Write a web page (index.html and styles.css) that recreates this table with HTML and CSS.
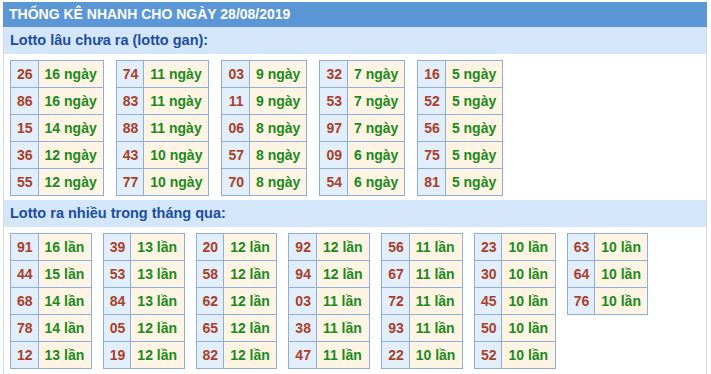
FILE: index.html
```html
<!DOCTYPE html>
<html>
<head>
<meta charset="utf-8">
<link rel="stylesheet" href="styles.css">
</head>
<body>
<div class="box">
  <div class="title">THỐNG KÊ NHANH CHO NGÀY 28/08/2019</div>
  <div class="sub">Lotto lâu chưa ra (lotto gan):</div>
  <div class="tables gan">
    <table><tr><td class="n">26</td><td class="v">16 ngày</td></tr><tr><td class="n">86</td><td class="v">16 ngày</td></tr><tr><td class="n">15</td><td class="v">14 ngày</td></tr><tr><td class="n">36</td><td class="v">12 ngày</td></tr><tr><td class="n">55</td><td class="v">12 ngày</td></tr></table>
    <table><tr><td class="n">74</td><td class="v">11 ngày</td></tr><tr><td class="n">83</td><td class="v">11 ngày</td></tr><tr><td class="n">88</td><td class="v">11 ngày</td></tr><tr><td class="n">43</td><td class="v">10 ngày</td></tr><tr><td class="n">77</td><td class="v">10 ngày</td></tr></table>
    <table><tr><td class="n">03</td><td class="v">9 ngày</td></tr><tr><td class="n">11</td><td class="v">9 ngày</td></tr><tr><td class="n">06</td><td class="v">8 ngày</td></tr><tr><td class="n">57</td><td class="v">8 ngày</td></tr><tr><td class="n">70</td><td class="v">8 ngày</td></tr></table>
    <table><tr><td class="n">32</td><td class="v">7 ngày</td></tr><tr><td class="n">53</td><td class="v">7 ngày</td></tr><tr><td class="n">97</td><td class="v">7 ngày</td></tr><tr><td class="n">09</td><td class="v">6 ngày</td></tr><tr><td class="n">54</td><td class="v">6 ngày</td></tr></table>
    <table><tr><td class="n">16</td><td class="v">5 ngày</td></tr><tr><td class="n">52</td><td class="v">5 ngày</td></tr><tr><td class="n">56</td><td class="v">5 ngày</td></tr><tr><td class="n">75</td><td class="v">5 ngày</td></tr><tr><td class="n">81</td><td class="v">5 ngày</td></tr></table>
  </div>
  <div class="sub">Lotto ra nhiều trong tháng qua:</div>
  <div class="tables nhieu">
    <table><tr><td class="n">91</td><td class="v">16 lần</td></tr><tr><td class="n">44</td><td class="v">15 lần</td></tr><tr><td class="n">68</td><td class="v">14 lần</td></tr><tr><td class="n">78</td><td class="v">14 lần</td></tr><tr><td class="n">12</td><td class="v">13 lần</td></tr></table>
    <table><tr><td class="n">39</td><td class="v">13 lần</td></tr><tr><td class="n">53</td><td class="v">13 lần</td></tr><tr><td class="n">84</td><td class="v">13 lần</td></tr><tr><td class="n">05</td><td class="v">12 lần</td></tr><tr><td class="n">19</td><td class="v">12 lần</td></tr></table>
    <table><tr><td class="n">20</td><td class="v">12 lần</td></tr><tr><td class="n">58</td><td class="v">12 lần</td></tr><tr><td class="n">62</td><td class="v">12 lần</td></tr><tr><td class="n">65</td><td class="v">12 lần</td></tr><tr><td class="n">82</td><td class="v">12 lần</td></tr></table>
    <table><tr><td class="n">92</td><td class="v">12 lần</td></tr><tr><td class="n">94</td><td class="v">12 lần</td></tr><tr><td class="n">03</td><td class="v">11 lần</td></tr><tr><td class="n">38</td><td class="v">11 lần</td></tr><tr><td class="n">47</td><td class="v">11 lần</td></tr></table>
    <table><tr><td class="n">56</td><td class="v">11 lần</td></tr><tr><td class="n">67</td><td class="v">11 lần</td></tr><tr><td class="n">72</td><td class="v">11 lần</td></tr><tr><td class="n">93</td><td class="v">11 lần</td></tr><tr><td class="n">22</td><td class="v">10 lần</td></tr></table>
    <table><tr><td class="n">23</td><td class="v">10 lần</td></tr><tr><td class="n">30</td><td class="v">10 lần</td></tr><tr><td class="n">45</td><td class="v">10 lần</td></tr><tr><td class="n">50</td><td class="v">10 lần</td></tr><tr><td class="n">52</td><td class="v">10 lần</td></tr></table>
    <table><tr><td class="n">63</td><td class="v">10 lần</td></tr><tr><td class="n">64</td><td class="v">10 lần</td></tr><tr><td class="n">76</td><td class="v">10 lần</td></tr></table>
  </div>
</div>
</body>
</html>
```
FILE: styles.css
```css
html, body {
  margin: 0;
  padding: 0;
  background: #ffffff;
}
body {
  font-family: "Liberation Sans", Arial, sans-serif;
  font-weight: bold;
  font-size: 14px;
}
.box {
  margin: 2px 4px 0 3px;
  border-left: 1px solid #d4d9e2;
  border-right: 1px solid #d4d9e2;
  height: 372px;
  box-sizing: border-box;
}
.title {
  background: #5b97d6;
  color: #ffffff;
  height: 25px;
  line-height: 25px;
  padding-left: 6px;
  margin-left: -1px;
  margin-right: -1px;
}
.sub {
  background: #d4e7fa;
  color: #1d4e9e;
  height: 27px;
  line-height: 27px;
  padding-left: 6px;
  font-size: 14.5px;
}
.tables {
  display: flex;
  align-items: flex-start;
  padding-left: 6px;
}
.gan {
  gap: 12px;
  padding-top: 6px;
  padding-bottom: 4px;
}
.nhieu {
  gap: 11px;
  padding-top: 6px;
}
table {
  border-collapse: collapse;
}
td {
  border: 1px solid #8eaee0;
  height: 27px;
  padding: 0 6px;
  box-sizing: border-box;
  white-space: nowrap;
}
td.n {
  background: #e3eefb;
  color: #a8412b;
  text-align: center;
  padding: 0 5px 0 6px;
}
td.v {
  background: #fdf4e4;
  color: #1c8a1c;
}
.nhieu td.v {
  padding-right: 6.5px;
}
```
